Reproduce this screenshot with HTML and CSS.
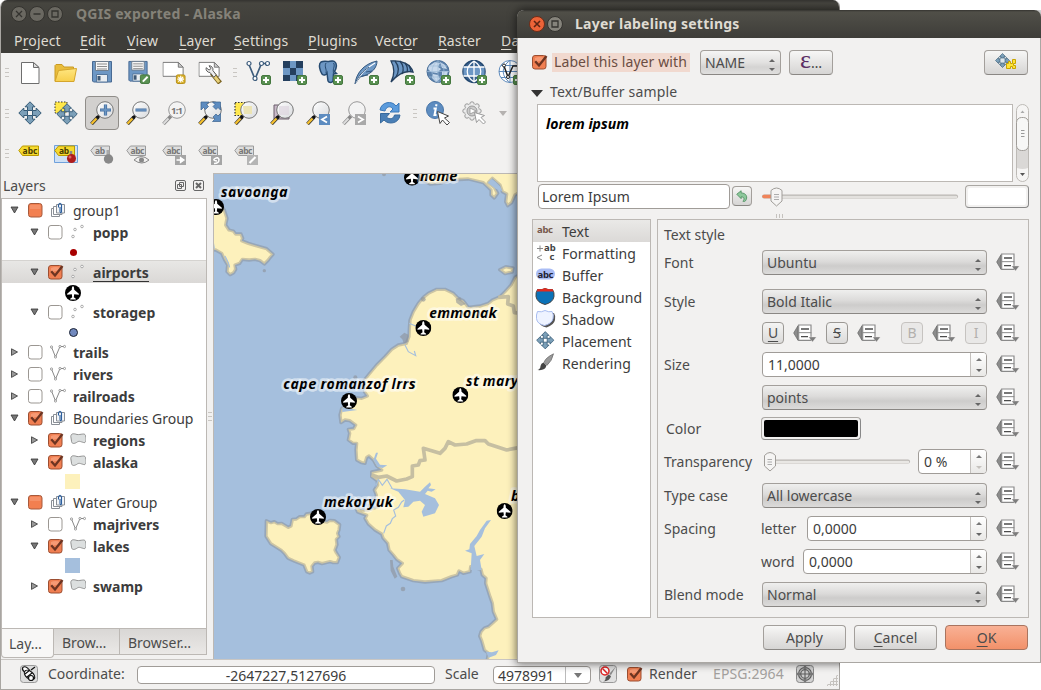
FILE: index.html
```html
<!DOCTYPE html>
<html lang="en">
<head>
<meta charset="utf-8">
<title>QGIS exported - Alaska</title>
<link rel="stylesheet" href="styles.css">
</head>
<body>
<svg class="sprite" width="0" height="0">
  <defs>
    <linearGradient id="gold" x1="0" y1="0" x2="0" y2="1"><stop offset="0" stop-color="#ffe680"/><stop offset="1" stop-color="#f7cf4d"/></linearGradient>
    <linearGradient id="lens" x1="0" y1="0" x2="1" y2="1"><stop offset="0" stop-color="#fff"/><stop offset="1" stop-color="#d8dadd"/></linearGradient>
    <symbol id="plus" viewBox="0 0 10 10"><rect x=".5" y=".5" width="9" height="9" rx="1.5" fill="#5a9152" stroke="#45783f"/><path d="M5 2v6M2 5h6" stroke="#fff" stroke-width="2"/></symbol>
    <symbol id="page" viewBox="0 0 24 24"><path d="M3.5 2.5h12l5.500 5v16h-17.500z" fill="#fff" stroke="#6e6e6e"/><path d="M15.500 2.500v5h5.500z" fill="#ddd" stroke="#6e6e6e"/></symbol>
    <symbol id="folder" viewBox="0 0 24 24"><path d="M1 21V5.500l1-1h6l2 2.500h9.500v3" fill="#e9bd3c" stroke="#c99a22"/><path d="M1 21.500L4.500 10.500 22.500 8.500 20 21.500z" fill="url(#gold)" stroke="#d5a52b"/></symbol>
    <symbol id="save" viewBox="0 0 24 24"><path d="M2.500 1.500h19v20.500h-18l-1-1z" fill="#6d97c4" stroke="#486a93"/><path d="M5.500 1.500h13v9h-13z" fill="#f7f7f7" stroke="#6f7e8e"/><path d="M7 4h10M7 6.500h10M7 9h10" stroke="#8c8c8c"/><path d="M6.500 14.500h11v7.500h-11z" fill="#e9edf1" stroke="#55779d"/><path d="M7.500 16h3v4.500h-3z" fill="#415a75"/></symbol>
    <symbol id="saveas" viewBox="0 0 24 25"><use href="#save" width="24" height="24"/><rect x="14.500" y="15.500" width="9.500" height="9" rx="1.500" fill="#5a9152" stroke="#45783f"/><path d="M17 22.500l5-5" stroke="#fff" stroke-width="2"/></symbol>
    <symbol id="wide" viewBox="0 0 24 24"><path d="M.5 2.500h16l5 5v9.500H.5z" fill="#fff" stroke="#777"/><path d="M16.500 2.500v5h5z" fill="#ccc" stroke="#777"/></symbol>
    <symbol id="composer" viewBox="0 0 24 25"><use href="#wide" width="24" height="24"/><rect x="14.500" y="15.500" width="9" height="9" rx="1.500" fill="#d9b12c" stroke="#b68e16"/><path d="M19 16.500v7M15.500 20h7M16.500 17.500l5 5M21.500 17.500l-5 5" stroke="#fff" stroke-width="1.200"/></symbol>
    <symbol id="wrench" viewBox="0 0 24 25"><use href="#wide" width="24" height="24"/><path d="M14 13.500l8.500 10.500" stroke="#7b6320" stroke-width="5"/><path d="M15.500 15.500l6 7.500" stroke="#e9d27a" stroke-width="3"/><path d="M11 6a4 4 0 0 1 4 5l3.500 4.500-2.500 2.500-4-5a4 4 0 0 1-4-5l3 2.500 2-1.500z" fill="#eee" stroke="#555"/></symbol>
    <symbol id="vec" viewBox="0 0 24 24"><path d="M2.500 3.500L9 19l6.500-15.500h6" fill="none" stroke="#3d5c7c" stroke-width="1.700"/><g fill="#fff" stroke="#3d5c7c" stroke-width="1.200"><circle cx="3" cy="3.500" r="2"/><circle cx="9" cy="18.500" r="2"/><circle cx="15.500" cy="3.500" r="2"/><circle cx="21.500" cy="3.500" r="2"/></g></symbol>
    <symbol id="raster" viewBox="0 0 24 24"><path d="M1 1h20v20H1z" fill="#6d97c4"/><path d="M1 1h7v7H1zM14 1h7v7h-7zM8 8h6v7H8zM1 15h7v6H1zM14 15h7v6h-7z" fill="#243f5e"/></symbol>
    <symbol id="pg" viewBox="0 0 24 24"><path d="M3 2c-3 2-1 9 1 12 2 2 4 1 5-1l1 8c1 2 4 2 5 0l.5-7 3-.5-2-2c2-3 3-8 0-10-2-1.500-5 0-6 0S6 .5 3 2z" fill="#6d97c4" stroke="#264a70" stroke-width="1.500"/><path d="M8 3c-2 4 1 6 0 10M15.500 3c2 3-1 5 0 10" fill="none" stroke="#264a70"/></symbol>
    <symbol id="feather" viewBox="0 0 24 24"><path d="M1 24C2 14 9 4 23 1c0 6-4 13-17 16z" fill="#6d97c4" stroke="#35587f"/><path d="M1 24C5 15 12 8 21 3" fill="none" stroke="#fff" stroke-width="1.200"/><path d="M1 24c3-8 8-13 14-17M8 16l6-1M12 12l6-1" fill="none" stroke="#35587f"/></symbol>
    <symbol id="shell" viewBox="0 0 24 24"><path d="M1 1c10-1 20 3 22 11-8-2-15 2-22 10 4-8 4-14 0-21z" fill="#6d97c4" stroke="#243f5e" stroke-width="1.300"/><path d="M5 1c4 5 4 11 1 16M10 1c4 5 4 9 2 13M15 3c3 4 3 6 2 9M19 5l2 6" fill="none" stroke="#243f5e" stroke-width="1.300"/></symbol>
    <symbol id="globe1" viewBox="0 0 24 24"><circle cx="12" cy="11.500" r="11" fill="#5e83ac" stroke="#4d719a"/><path d="M3 6l6-4 5 1-2 4 3 2-4 4-6-1-3-3zM14 2l5 3 2 4-5-1zM7 14l5 1 2 4-4 3-4-4zM16 11l6 0-2 7-4 2z" fill="#c8d9ec"/><path d="M1 11.500h22M12 .5v22M3 6h18M3 17h18M12 .5c-8 6-8 16 0 22M12 .5c8 6 8 16 0 22" fill="none" stroke="#9fbbd9" stroke-width=".7"/></symbol>
    <symbol id="globe2" viewBox="0 0 24 24"><circle cx="12" cy="11.500" r="11" fill="#39618e" stroke="#24486f" stroke-width="1.500"/><path d="M1.500 7h21v9h-21z" fill="#6d97c4"/><path d="M1.500 7h21M1.500 16h21M12 1v21M12 1c-9 6-9 15 0 21M12 1c9 6 9 15 0 21" fill="none" stroke="#fff" stroke-width="1.300"/></symbol>
    <symbol id="globe3" viewBox="0 0 24 24"><circle cx="12" cy="11.500" r="11" fill="#fff" stroke="#5f8bbc"/><path d="M1 11.500h22M12 .5v22M3 5.500h18M3 17.500h18M12 .5c-9 6-9 16 0 22" fill="none" stroke="#5f8bbc"/><path d="M6 6l4 11 5-11h5" fill="none" stroke="#222" stroke-width="1.500"/><circle cx="6" cy="5.500" r="1.500" fill="#fff" stroke="#222"/><circle cx="10" cy="17" r="1.500" fill="#fff" stroke="#222"/></symbol>
    <symbol id="pan" viewBox="0 0 24 24"><g fill="#7b9fb8" stroke="#355a75"><path d="M12 .8l5 5h-2.500v3.700h-5V5.800H7z"/><path d="M12 23.200l5-5h-2.500v-3.700h-5v3.700H7z"/><path d="M.8 12l5-5v2.500h3.700v5H5.800V17z"/><path d="M23.200 12l-5-5v2.500h-3.700v5h3.700V17z"/></g></symbol>
    <symbol id="pansel" viewBox="0 0 24 24"><path d="M1 1h12l-1 11H1z" fill="#ffe74a" stroke="#333" stroke-dasharray="1.500 1.500"/><use href="#pan" x="2" y="2" width="22" height="22"/></symbol>
    <symbol id="mag" viewBox="0 0 24 24"><path d="M1.500 23L8 16" stroke="#333" stroke-width="3.600"/><path d="M1.500 22.800L6.500 17.500" stroke="#f5c02e" stroke-width="2.300"/><path d="M7 17l3-3" stroke="#111" stroke-width="3"/><circle cx="15" cy="9" r="8.300" fill="url(#lens)" stroke="#777"/></symbol>
    <symbol id="maggray" viewBox="0 0 24 24"><path d="M1.500 23L9 15" stroke="#888" stroke-width="3.400"/><path d="M1.500 22.800L6.500 17.500" stroke="#ddd" stroke-width="2"/><circle cx="15" cy="9" r="8.300" fill="#f3f3f3" stroke="#999"/></symbol>
    <symbol id="zin" viewBox="0 0 24 24"><use href="#mag" width="24" height="24"/><path d="M15.500 3.500v11M10 9h11" stroke="#446e9f" stroke-width="3.200"/><path d="M15.500 4v10M10.500 9h10" stroke="#6d97c4" stroke-width="1.600"/></symbol>
    <symbol id="zout" viewBox="0 0 24 24"><use href="#mag" width="24" height="24"/><path d="M9.500 9h11" stroke="#446e9f" stroke-width="3.200"/><path d="M10 9h10" stroke="#6d97c4" stroke-width="1.600"/></symbol>
    <symbol id="z11" viewBox="0 0 24 24"><use href="#maggray" width="24" height="24"/><text x="9" y="13" font-family="Noto Sans" font-size="9.500" font-weight="700" fill="#777" textLength="12">1:1</text></symbol>
    <symbol id="zfull" viewBox="0 0 24 24"><use href="#mag" width="24" height="24"/><g fill="#5d8cc0" stroke="#39618e" stroke-width=".7"><path d="M3 1h8L8.500 3.500l2 2-3 3-2-2L3 9zM22.500 1h-8L17 3.500l-2 2 3 3 2-2L22.500 9zM22.500 20.500h-8L17 18l-2-2 3-3 2 2 2.500-2.500z"/></g></symbol>
    <symbol id="zsel" viewBox="0 0 24 24"><path d="M1 1.500h12v13H1z" fill="#ffe84f" stroke="#333" stroke-width="1.200" stroke-dasharray="1.500 1.500"/><use href="#mag" width="24" height="24"/><path d="M9 5h9v8H10z" fill="#ece4b4"/></symbol>
    <symbol id="zlay" viewBox="0 0 24 24"><path d="M4 4h15v14H4z" fill="#c9b9c9" stroke="#6b5d6b"/><use href="#mag" width="24" height="24"/><path d="M9 5h10v9H9z" fill="#ded5df" opacity=".7"/></symbol>
    <symbol id="zlast" viewBox="0 0 24 24"><use href="#mag" width="24" height="24"/><path d="M13 13h11v11H13z" fill="#5d8cc0"/><path d="M21 15.500l-5 3 5 3" fill="none" stroke="#fff" stroke-width="1.800"/></symbol>
    <symbol id="znext" viewBox="0 0 24 24"><use href="#maggray" width="24" height="24"/><path d="M13 13h11v11H13z" fill="#a9a9a9"/><path d="M16 15.500l5 3-5 3" fill="none" stroke="#fff" stroke-width="1.800"/></symbol>
    <symbol id="refresh" viewBox="0 0 24 24"><path d="M2 9C3 1 14-1 18 5l3-3v9h-9l3-3C12 4 8 6 7 10z" fill="#5b9bdc" stroke="#3b78b8"/><path d="M22 14c-1 9-12 10-16 5l-3.500 3v-9.500h9L8.500 16c3 3 7 2 8-2z" fill="#4a7fb6" stroke="#386a9d"/></symbol>
    <symbol id="ident" viewBox="0 0 24 24"><circle cx="9" cy="9" r="8.500" fill="#5d8cc0" stroke="#4a76a8"/><path d="M10.500 3.200l-.4 2M7.500 7.500h2.300L8.500 14h2" fill="none" stroke="#fff" stroke-width="2"/><path d="M11.500 10.500l2.500 12 2.500-3.500 4.500 5 2.500-2.500-5-4.500 4-2z" fill="#fff" stroke="#444"/></symbol>
    <symbol id="gear" viewBox="0 0 24 24"><g fill="#ececec" stroke="#999"><circle cx="10" cy="3" r="2.200"/><circle cx="15" cy="5" r="2.200"/><circle cx="17" cy="10" r="2.200"/><circle cx="15" cy="15" r="2.200"/><circle cx="10" cy="17" r="2.200"/><circle cx="5" cy="15" r="2.200"/><circle cx="3" cy="10" r="2.200"/><circle cx="5" cy="5" r="2.200"/></g><circle cx="10" cy="10" r="7" fill="#ececec"/><circle cx="10" cy="10" r="5" fill="#ccc" stroke="#999"/><path d="M8 7l6 3-6 3z" fill="#fff" stroke="#888" stroke-width=".7"/><path d="M12.500 11.500l2 10 2.500-3 4.500 4.500 2-2-4.500-4.500 3.500-2z" fill="#fff" stroke="#999"/></symbol>
    <symbol id="tagY" viewBox="0 0 24 24"><path d="M.8 8.500L4.500 4H20.500v9.500H4.500z" fill="#f5d92e" stroke="#b99900"/></symbol>
    <symbol id="tagG" viewBox="0 0 24 24"><path d="M.8 8.500L4.500 4H19.500v9.500H4.500z" fill="#dedede" stroke="#9a9a9a"/></symbol>
    <symbol id="dd" viewBox="0 0 75 60"><path d="M5 30L18 8v44z" fill="#8c8c8c" stroke="#626262" stroke-width="2"/><path d="M20 6h37v46H20z" fill="#fff" stroke="#8a8a8a" stroke-width="3.500"/><path d="M18 29h40" stroke="#8a8a8a" stroke-width="3"/><path d="M27 18h24M27 41h21" stroke="#4c4c4c" stroke-width="4"/><path d="M50 42h23L61.500 57z" fill="#7d7d7d" stroke="#f2f1f0" stroke-width="1"/></symbol>
    <symbol id="chk" viewBox="0 0 17 16"><rect x=".5" y="1.500" width="13.500" height="13.500" rx="2.500" fill="#f07f52" stroke="#9c4e31"/><path d="M3 4q4.500-2 9 0v3q-5-1-9 2z" fill="#f9a583" opacity=".7"/><path d="M3.200 7.200L7 11.500 14.500 2" fill="none" stroke="#6d3421" stroke-width="2.300"/></symbol>
    <symbol id="part" viewBox="0 0 17 16"><rect x=".5" y="1.500" width="13.500" height="13.500" rx="2.500" fill="#f27f50" stroke="#a75a3c"/><path d="M2 3h10.500v4H2z" fill="#f69872" opacity=".7"/></symbol>
    <symbol id="unc" viewBox="0 0 17 16"><rect x=".5" y="1.500" width="13.500" height="13.500" rx="2.500" fill="#fff" stroke="#9b9792"/></symbol>
    <symbol id="down" viewBox="0 0 9 8"><path d="M1 1h7L4.500 7z" fill="#777" stroke="#333" stroke-width=".8"/></symbol>
    <symbol id="right" viewBox="0 0 9 8"><path d="M1.500 .8v6.600L7.500 4z" fill="#999" stroke="#444" stroke-width=".9"/></symbol>
    <symbol id="grp" viewBox="0 0 16 16"><g fill="#fff" stroke="#8a8f96"><path d="M1.500 6.500h8v8h-8z"/><path d="M3.500 4.500h8.500v8H3.500z"/><path d="M6.500 2.500h8v8.500h-8z" fill="#f2f5f8"/></g><path d="M8.500 5.500V3q1.500-3.500 3 0v7q-1.200 1.500-1.500-.5V5" fill="none" stroke="#2c5f9e" stroke-width="1.100"/></symbol>
    <symbol id="pts" viewBox="0 0 16 16"><g fill="#fff" stroke="#999" stroke-width=".8"><circle cx="5" cy="5.500" r="1.300"/><circle cx="12" cy="2.500" r="1.300"/><circle cx="3" cy="12.500" r="1.300"/></g></symbol>
    <symbol id="lin" viewBox="0 0 16 16"><path d="M1.500 3l4 10L10 2.500h5" fill="none" stroke="#888"/><g fill="#fff" stroke="#888" stroke-width=".8"><circle cx="1.500" cy="3" r="1.100"/><circle cx="5.500" cy="13" r="1.100"/><circle cx="10" cy="2.500" r="1.100"/><circle cx="14.500" cy="2.500" r="1.100"/></g></symbol>
    <symbol id="pol" viewBox="0 0 16 16"><path d="M.8 4.500C1 1 4 1.500 7 2.500 11 3 14.500 .5 15.500 3.500s1 8-2 7C10 9.500 9 8.500 6.500 10.500 3 12.500 1.500 11 1.500 9z" fill="#dcdfdf" stroke="#888" stroke-width=".9"/></symbol>
    <symbol id="plane" viewBox="0 0 24 24"><circle cx="12" cy="12" r="12" fill="#000"/><path d="M12 2c1.200 0 1.800 2 1.800 5l7 6v1.800l-7-1-.6 4.700 3 2v1.200H7.800v-1.200l3-2-.6-4.700-7 1V13l7-6c0-3 .6-5 1.800-5z" fill="#fff"/></symbol>
  </defs>
</svg>

<div class="win main">
  <div class="titlebar">
    <svg class="wbtn" viewBox="0 0 16 16"><circle cx="8" cy="8" r="7.500"/><path d="M5 5l6 6M11 5l-6 6"/></svg>
    <svg class="wbtn" viewBox="0 0 16 16"><circle cx="8" cy="8" r="7.500"/><path d="M4.500 8h7"/></svg>
    <svg class="wbtn" viewBox="0 0 16 16"><circle cx="8" cy="8" r="7.500"/><path d="M5 5h6v6H5z"/></svg>
    <span class="title">QGIS exported - Alaska</span>
  </div>
  <div class="menubar"><span class="m1">P<u>r</u>oject</span><span class="m2"><u>E</u>dit</span><span class="m3"><u>V</u>iew</span><span class="m4"><u>L</u>ayer</span><span class="m5"><u>S</u>ettings</span><span class="m6"><u>P</u>lugins</span><span class="m7">Vect<u>o</u>r</span><span class="m7"><u>R</u>aster</span><span><u>D</u>atabase</span></div>

  <div class="toolrow r1">
    <i class="grip"></i>
    <b><svg><use href="#page"/></svg></b><b><svg><use href="#folder"/></svg></b><b><svg><use href="#save"/></svg></b><b><svg><use href="#saveas"/></svg></b><b><svg><use href="#composer"/></svg></b><b><svg><use href="#wrench"/></svg></b>
    <i class="grip"></i>
    <b><svg><use href="#vec"/></svg><svg class="badge"><use href="#plus"/></svg></b><b><svg><use href="#raster"/></svg><svg class="badge"><use href="#plus"/></svg></b><b><svg><use href="#pg"/></svg><svg class="badge"><use href="#plus"/></svg></b><b><svg><use href="#feather"/></svg><svg class="badge"><use href="#plus"/></svg></b><b><svg><use href="#shell"/></svg><svg class="badge"><use href="#plus"/></svg></b><b><svg><use href="#globe1"/></svg><svg class="badge"><use href="#plus"/></svg></b><b><svg><use href="#globe2"/></svg><svg class="badge"><use href="#plus"/></svg></b><b><svg><use href="#globe3"/></svg><svg class="badge"><use href="#plus"/></svg></b>
  </div>
  <div class="toolrow r2">
    <i class="grip"></i>
    <b><svg><use href="#pan"/></svg></b><b><svg><use href="#pansel"/></svg></b><b class="on"><svg><use href="#zin"/></svg></b><b><svg><use href="#zout"/></svg></b><b><svg><use href="#z11"/></svg></b><b><svg><use href="#zfull"/></svg></b><b><svg><use href="#zsel"/></svg></b><b><svg><use href="#zlay"/></svg></b><b><svg><use href="#zlast"/></svg></b><b><svg><use href="#znext"/></svg></b><b><svg><use href="#refresh"/></svg></b>
    <i class="grip"></i>
    <b><svg><use href="#ident"/></svg></b><b><svg><use href="#gear"/></svg></b><i class="drop"></i>
  </div>
  <div class="toolrow r3">
    <i class="grip"></i>
    <b><svg viewBox="0 0 24 24"><use href="#tagY"/><text class="abc" x="4.500" y="12" textLength="15">abc</text></svg></b>
    <b><svg viewBox="0 0 24 24"><path d="M.5 3.500h23v17H.5z" fill="#cfe0f4" stroke="#6fa1dc"/><use href="#tagY"/><text class="abc" x="5" y="12" textLength="10">ab</text><path d="M17 16V9" stroke="#888" stroke-width="2.500"/><circle cx="17.500" cy="16.500" r="4.500" fill="#b01c1c"/><circle cx="16" cy="15" r="1.500" fill="#d66"/></svg></b>
    <b><svg viewBox="0 0 24 24"><use href="#tagG"/><text class="abc g" x="5" y="12" textLength="10">ab</text><path d="M18 16V8" stroke="#aaa" stroke-width="3"/><circle cx="18.500" cy="17" r="4.700" fill="#888"/></svg></b>
    <b><svg viewBox="0 0 24 24"><use href="#tagG"/><text class="abc g" x="4.500" y="12" textLength="14">abc</text><path d="M8 18q7-7 15 0-7 6-15 0z" fill="#f2f1f0" stroke="#888"/><circle cx="15.500" cy="18" r="2.500" fill="#888"/></svg></b>
    <b><svg viewBox="0 0 24 24"><use href="#tagG"/><text class="abc g" x="4.500" y="12" textLength="14">abc</text><path d="M13 13h11v10H13z" fill="#a5a5a5"/><path d="M14.500 18h4M18.500 15.500l3.500 2.500-3.500 2.500z" fill="#fff" stroke="#fff" stroke-width="1.300"/></svg></b>
    <b><svg viewBox="0 0 24 24"><use href="#tagG"/><text class="abc g" x="4.500" y="12" textLength="14">abc</text><path d="M13 13h11v10H13z" fill="#a5a5a5"/><path d="M16 21.500q5 0 5-4-1-3-4-1t2 2.500" fill="none" stroke="#fff" stroke-width="1.500"/></svg></b>
    <b><svg viewBox="0 0 24 24"><use href="#tagG"/><text class="abc g" x="4.500" y="12" textLength="14">abc</text><path d="M13 13h11v10H13z" fill="#b5b5b5"/><path d="M15.500 21l6-6" stroke="#fff" stroke-width="2.200"/></svg></b>
  </div>

  <div class="work">
    <div class="dock">
      <div class="dockhead"><span>Layers</span>
        <svg viewBox="0 0 12 12"><rect x=".5" y=".5" width="10" height="10" rx="1.500"/><path d="M4.500 2.500h4v4h-4zM2.500 4.500h4v4h-4z"/></svg>
        <svg viewBox="0 0 12 12"><rect x=".5" y=".5" width="10" height="10" rx="1.500"/><path d="M3 3l5 5M8 3L3 8" stroke-width="2"/></svg>
      </div>
      <div class="tree">
        <div class="node"><svg class="tri"><use href="#down"/></svg><svg class="cb"><use href="#part"/></svg><svg class="ic"><use href="#grp"/></svg><span class="g">group1</span></div>
        <div class="node sub"><svg class="tri"><use href="#down"/></svg><svg class="cb"><use href="#unc"/></svg><svg class="ic"><use href="#pts"/></svg><span>popp</span></div>
        <div class="sym"><i class="dot red"></i></div>
        <div class="node sub sel"><svg class="tri"><use href="#down"/></svg><svg class="cb"><use href="#chk"/></svg><svg class="ic"><use href="#pts"/></svg><span class="ul">airports</span></div>
        <div class="sym"><svg class="pl"><use href="#plane"/></svg></div>
        <div class="node sub"><svg class="tri"><use href="#down"/></svg><svg class="cb"><use href="#unc"/></svg><svg class="ic"><use href="#pts"/></svg><span>storagep</span></div>
        <div class="sym"><i class="dot blue"></i></div>
        <div class="node"><svg class="tri"><use href="#right"/></svg><svg class="cb"><use href="#unc"/></svg><svg class="ic"><use href="#lin"/></svg><span>trails</span></div>
        <div class="node"><svg class="tri"><use href="#right"/></svg><svg class="cb"><use href="#unc"/></svg><svg class="ic"><use href="#lin"/></svg><span>rivers</span></div>
        <div class="node"><svg class="tri"><use href="#right"/></svg><svg class="cb"><use href="#unc"/></svg><svg class="ic"><use href="#lin"/></svg><span>railroads</span></div>
        <div class="node"><svg class="tri"><use href="#down"/></svg><svg class="cb"><use href="#chk"/></svg><svg class="ic"><use href="#grp"/></svg><span class="g">Boundaries Group</span></div>
        <div class="node sub"><svg class="tri"><use href="#right"/></svg><svg class="cb"><use href="#chk"/></svg><svg class="ic"><use href="#pol"/></svg><span>regions</span></div>
        <div class="node sub"><svg class="tri"><use href="#down"/></svg><svg class="cb"><use href="#chk"/></svg><svg class="ic"><use href="#pol"/></svg><span>alaska</span></div>
        <div class="sym"><i class="sq yellow"></i></div>
        <div class="node"><svg class="tri"><use href="#down"/></svg><svg class="cb"><use href="#part"/></svg><svg class="ic"><use href="#grp"/></svg><span class="g">Water Group</span></div>
        <div class="node sub"><svg class="tri"><use href="#right"/></svg><svg class="cb"><use href="#unc"/></svg><svg class="ic"><use href="#lin"/></svg><span>majrivers</span></div>
        <div class="node sub"><svg class="tri"><use href="#down"/></svg><svg class="cb"><use href="#chk"/></svg><svg class="ic"><use href="#pol"/></svg><span>lakes</span></div>
        <div class="sym"><i class="sq water"></i></div>
        <div class="node sub"><svg class="tri"><use href="#right"/></svg><svg class="cb"><use href="#chk"/></svg><svg class="ic"><use href="#pol"/></svg><span>swamp</span></div>
      </div>
      <div class="tabs"><span class="tab cur">Lay…</span><span class="tab t2">Brow…</span><span class="tab t3">Browser…</span></div>
    </div>
    <div class="split"><i class="grip"></i></div>
    <svg class="map" viewBox="27 12 933 1455" preserveAspectRatio="xMinYMin slice">
      <rect x="24" y="9" width="940" height="1462" fill="#a5bfdd"/>
      <g class="land">
        <path d="M10 90L40 95 58 120 66 145 62 165 72 180 85 183 92 192 108 192 113 205 110 212 130 220 150 226 185 236 204 253 196 262 190 270 178 282 165 272 150 268 132 270 112 268 104 280 90 285 92 298 86 308 75 314 66 305 68 285 58 268 50 250 32 240 10 238z"/>
        <path d="M640 -10L650 30 675 42 705 40 735 30 790 27 835 38 858 60 858 75 868 84 878 70 868 52 850 38 862 25 885 45 892 65 905 72 902 95 908 107 920 98 930 75 960 58 960-10z"/>
        <path d="M884 299l18-9 22 4-2 12-22 5z"/>
        <path d="M970 300L930 322 918 345 900 365 885 380 862 390 850 400 825 408 790 412 775 392 760 385 745 370 720 358 695 358 670 370 655 382 640 400 625 425 615 450 613 475 612 500 604 520 580 525 560 538 540 560 515 585 490 615 478 630 480 655 478 665 487 678 470 685 455 683 430 702 410 715 405 735 408 758 420 750 434 752 452 765 446 776 430 778 434 790 430 810 444 820 455 820 453 840 455 870 470 878 480 880 485 862 492 858 505 870 515 888 530 900 500 906 500 920 516 932 518 945 508 960 514 975 512 990 520 1010 490 1020 470 1020 452 1012 458 1026 485 1036 480 1045 490 1062 510 1080 530 1092 534 1104 548 1120 552 1140 565 1155 575 1168 592 1180 578 1195 584 1210 590 1220 625 1232 660 1236 710 1232 740 1220 757 1215 762 1203 775 1210 795 1205 797 1190 828 1198 832 1215 843 1225 842 1240 855 1280 862 1300 865 1325 875 1348 862 1360 850 1370 838 1374 828 1385 824 1398 830 1412 838 1440 850 1450 845 1480 970 1480z"/>
        <path d="M184 1052l14 6 10-3 10 6 12-1 20 12 8-4 4-20 12-1 10-7 14 0 6-8 20-3 30 25 12 2 8-5 14 1 16 12-2 16-4 10 4 10-8 8 2 16-6 16 4 8 9 14-6 16-12 0-10-3-24 6-12-4-10 2-8 10 2 16-9 4-9-4-8-20-30-12-18-8-10-14-10-10-32-20-10-16-4-6z"/>
      </g>
      <g class="lake">
        <path d="M555 955L600 958 645 965 660 950 675 937 678 945 670 955 692 958 680 965 668 962 660 972 690 985 702 1005 690 1030 655 1040 650 1025 660 1005 645 992 625 995 610 1010 595 1012 600 990 580 965z"/>
        <path d="M797 1200L800 1150 780 1142 793 1138 795 1122 815 1098 825 1080 845 1052 858 1050 840 1075 830 1100 808 1128 815 1158 838 1152 825 1170 830 1200z"/>
        <path d="M843 1445l18 2 20-6-8 14-22 8zM848 38l12-12 12 10 14 14 6 14-20-8zM412 712l45 8-45 6zM505 870l8-22 6 0-6 18 12 18 22 2-14 8-16-4z"/>
        <path class="river" d="M60 258l10 20 4 14M24 212l4 24M612 460l20 8M600 525l10 20 22 12-4-14M536 1090l8-22 12-8 6-14 10-8-6-18 14-8 10-16 8-6M512 950l8-22 12 18 14-18 16 28"/>
      </g>
      <path class="bord" d="M500 915L520 922 545 918 575 933 605 927 622 920 622 888 640 885 645 872 660 870 655 835 680 842 705 850 720 835 730 815 750 825 785 822 812 812 840 812 850 822 880 832 905 840 945 832 965 832"/>
      <path class="bord" d="M880 382L910 380 908 402 925 408 928 428 950 430"/>
      <g fill="#8d9299" opacity=".6"><circle cx="178" cy="302" r="5"/><circle cx="537" cy="13" r="6"/><circle cx="655" cy="388" r="7"/><path d="M752 386l14-4 4 10 12 10-14 6-14-10zM584 500l14-12 12 6 0 22-14 4-4-12z"/><circle cx="451" cy="622" r="6"/><circle cx="594" cy="1257" r="7"/><path d="M555 1170l8 0 2 20 12 30-8 6-12-24z"/></g>
      <use href="#plane" x="9" y="87" width="48" height="48"/><use href="#plane" x="597" y="-1" width="48" height="48"/><use href="#plane" x="631" y="450" width="48" height="48"/><use href="#plane" x="408" y="669" width="48" height="48"/><use href="#plane" x="742" y="651" width="48" height="48"/><use href="#plane" x="315" y="1017" width="48" height="48"/><use href="#plane" x="875" y="999" width="48" height="48"/>
      <g class="lbl">
        <text x="48" y="81" textLength="200">savoonga</text><text x="645" y="34" textLength="112">nome</text><text x="673" y="443" textLength="202">emmonak</text><text x="235" y="658" textLength="397">cape romanzof lrrs</text><text x="783" y="647" textLength="178">st marys</text><text x="357" y="1011" textLength="207">mekoryuk</text><text x="918" y="993">bethel</text>
      </g>
    </svg>
  </div>

  <div class="status">
    <svg class="mouse" viewBox="0 0 18 18"><rect x=".5" y=".5" width="17" height="17" rx="3" fill="#ddd" stroke="#999"/><g stroke="#111" fill="#fff" stroke-width="1.200"><ellipse cx="6" cy="5" rx="4" ry="2.500" transform="rotate(40 6 5)"/><ellipse cx="9.500" cy="10" rx="6" ry="3.600" transform="rotate(40 9.500 10)"/><circle cx="11" cy="13" r="2.500"/><path d="M5 9l5-4M7 12l5-4M11 5l4-3" fill="none"/></g></svg>
    <span class="coord">Coordinate:</span><span class="edit">-2647227,5127696</span><span class="scale">Scale</span>
    <span class="combo2"><span>4978991</span><i></i></span>
    <svg class="stop" viewBox="0 0 18 18"><rect x=".5" y=".5" width="17" height="17" rx="3" fill="#e0e0e0" stroke="#999"/><path d="M16.500 2l-4.500 8 -2-1z" fill="#888"/><path d="M9.500 9.500l2.500 1.500q-1 5-8 5.500 3-1 2.500-4z" fill="#555"/><circle cx="6" cy="6" r="4" fill="#fff" stroke="#d22" stroke-width="1.500"/><path d="M3.500 3.500l5 5" stroke="#d22" stroke-width="1.500"/></svg>
    <svg class="cb"><use href="#chk"/></svg><span class="rend">Render</span><span class="epsg">EPSG:2964</span>
    <svg class="crs" viewBox="0 0 18 18"><rect x=".5" y=".5" width="17" height="17" rx="3" fill="#d2d2d2" stroke="#888"/><g fill="none" stroke="#5c5c5c" stroke-width="1.100"><circle cx="9" cy="9" r="6.500" fill="#b4b4b4"/><path d="M9 1v16M1 9h16" stroke-width="2.500" stroke="#777"/><circle cx="9" cy="9" r="4.200" fill="#ccc"/><path d="M9 4.800v8.400M4.800 9h8.400"/></g></svg>
    <i class="sizer"></i>
  </div>
</div>

<div class="win dialog">
  <div class="titlebar">
    <svg class="wbtn hot" viewBox="0 0 16 16"><circle cx="8" cy="8" r="7.500"/><path d="M5 5l6 6M11 5l-6 6"/></svg>
    <svg class="wbtn lite" viewBox="0 0 16 16"><circle cx="8" cy="8" r="7.500"/><path d="M5 5h6v6H5z"/></svg>
    <span class="title">Layer labeling settings</span>
  </div>
  <div class="top">
    <svg class="cb"><use href="#chk"/></svg><span class="hl">Label this layer with</span><span class="combo name">NAME</span><span class="btn eps"><em>ε</em>…</span>
    <span class="btn auto"><svg viewBox="0 0 24 18"><use href="#pan" x="1" y="0" width="15" height="15"/><path d="M6 5h5v5H6z" fill="#dce6ec" stroke="#355a75" stroke-width=".6"/><path d="M12.500 15.500v-5h2v-2h2v2h2v-4h3v4h-2v2h2v3h-3v-2h-2v2z" fill="#ffe437" stroke="#c9a500"/></svg></span>
  </div>
  <div class="collapse"><i></i><span>Text/Buffer sample</span></div>
  <div class="sample">
    <div class="preview">lorem ipsum</div>
    <svg class="scroll" viewBox="0 0 13 78"><rect x=".5" y=".5" width="12" height="77" rx="6" fill="#f6f5f4" stroke="#bdbab6"/><path d="M1 40h11v24q-5 2-11 0z" fill="#dad8d6"/><path d="M4.500 9h4L6.500 6.500z" fill="#aaa"/><path d="M4 69h5L6.500 72z" fill="#555"/><rect x=".5" y="13.500" width="12" height="33" rx="5" fill="#f7f7f6" stroke="#a09d99"/><path d="M5 26.500h3.500M5 29.500h3.500M5 32.500h3.500" stroke="#999"/></svg>
  </div>
  <div class="samplectl">
    <span class="edit">Lorem Ipsum</span>
    <span class="btn undo"><svg viewBox="0 0 16 16"><path d="M2 6l5-4v2.500c6 0 8 5 5 9-1 1-2 1-3 .5 2-2 2-5-2-5V11z" fill="#8cc79b" stroke="#4f8f60"/></svg></span>
    <svg class="slider s1" viewBox="0 0 196 20"><path d="M2 9.500h192" stroke="#b9b6b2" stroke-width="4" stroke-linecap="round"/><path d="M2 10h192" stroke="#e3e1de" stroke-width="2.500" stroke-linecap="round"/><path d="M2 9.500h9" stroke="#f0845a" stroke-width="3.500" stroke-linecap="round"/><path class="knob" d="M9 3.500q5.500-5 11 0v10.500L14.500 19 9 14z"/><path d="M12 7.500h5M12 10h5M12 12.500h5" stroke="#999" stroke-width=".8"/></svg>
    <span class="color white"></span>
  </div>
  <div class="dots"><i></i><i></i><i></i></div>
  <div class="body">
    <div class="list">
      <div class="it cur"><svg viewBox="0 0 20 20"><text class="sm" x="1" y="12" fill="#76594d" textLength="16">abc</text></svg><span>Text</span></div>
      <div class="it"><svg viewBox="0 0 20 20"><text class="sm" fill="#444"><tspan x="8" y="8">ab</tspan><tspan x="13.500" y="16.500">c</tspan></text><path d="M1 5.500h6M4 2.500v6M6 12l-5 2.500 5 2.500" fill="none" stroke="#888"/></svg><span>Formatting</span></div>
      <div class="it"><svg viewBox="0 0 20 20"><rect x="0" y="3.500" width="19" height="11" rx="5.500" fill="#aabdf5"/><text class="sm" x="1.500" y="12.500" fill="#223" textLength="16">abc</text></svg><span>Buffer</span></div>
      <div class="it"><svg viewBox="0 0 20 20"><path d="M1.500 2.500q4 1 7.500-1 4 2 7.500 1 2 3 1.500 7-1 6-9 8-8-2-9-8-.5-4 1.500-7z" fill="#0b72b8" stroke="#444"/><path d="M1.500 2q4 1 7.500-1 4 2 7.500 1l1 2.500H.8z" fill="#e02b20"/></svg><span>Background</span></div>
      <div class="it"><svg viewBox="0 0 20 20"><path d="M3 4q4 1 7.500-1 4 2 7.500 1 2 3 1 7-1 5-8.500 7.500Q3 17 2 11z" fill="#555"/><path d="M1.500 2.500q4 1 7.500-1 4 2 7 1 2 3 1 7-1 5-8.500 7Q1 15 .5 9.500 0 6 1.500 2.500z" fill="#eef3ff" stroke="#a9bdf0"/></svg><span>Shadow</span></div>
      <div class="it"><svg viewBox="0 0 20 20"><use href="#pan" width="18.500" height="18.500"/></svg><span>Placement</span></div>
      <div class="it"><svg viewBox="0 0 20 20"><path d="M17.500.8q-8 4-9.500 8.500l3 3Q16 8 17.500.8z" fill="#999" stroke="#666" stroke-width=".7"/><path d="M7.500 9.500l3 3Q9 18 1.500 17q3-1 3-4 .5-3 3-3.500z" fill="#444"/></svg><span>Rendering</span></div>
    </div>
    <div class="panel">
      <div class="ptitle">Text style</div>
      <div class="row r39"><label>Font</label><span class="combo f">Ubuntu</span><svg class="dd"><use href="#dd"/></svg></div>
      <div class="row r33"><label>Style</label><span class="combo f">Bold Italic</span><svg class="dd"><use href="#dd"/></svg></div>
      <div class="row r30 short"><label></label><span class="fb"><u>U</u></span><svg class="dd"><use href="#dd"/></svg><span class="fb m9"><s>S</s></span><svg class="dd"><use href="#dd"/></svg><span class="fb off m20">B</span><svg class="dd"><use href="#dd"/></svg><span class="fb off m9">I</span><svg class="dd"><use href="#dd"/></svg></div>
      <div class="row r33"><label>Size</label><span class="spin f">11,0000<i></i></span><svg class="dd"><use href="#dd"/></svg></div>
      <div class="row r32"><label></label><span class="combo f">points</span><svg class="dd"><use href="#dd"/></svg></div>
      <div class="row r32 short"><label class="in">Color</label><span class="color black"></span><svg class="dd far"><use href="#dd"/></svg></div>
      <div class="row r34"><label>Transparency</label><svg class="slider s2" viewBox="0 0 148 20"><path d="M4 9.500h142" stroke="#b9b6b2" stroke-width="4" stroke-linecap="round"/><path d="M4 10h142" stroke="#e9e7e4" stroke-width="2.500" stroke-linecap="round"/><path class="knob" d="M2.500 3.500q5.500-6 11 0v10.500L8 19 2.500 14z"/><path d="M5.500 7.500H10M5.500 10H10M5.500 12.500H10" stroke="#999" stroke-width=".8"/></svg><span class="spin pct">0 %<i class="lo"></i></span><svg class="dd"><use href="#dd"/></svg></div>
      <div class="row r33"><label>Type case</label><span class="combo f">All lowercase</span><svg class="dd"><use href="#dd"/></svg></div>
      <div class="row r33"><label>Spacing</label><span class="w1">letter</span><span class="spin sl">0,0000<i></i></span><svg class="dd"><use href="#dd"/></svg></div>
      <div class="row r33"><label></label><span class="w2">word</span><span class="spin sw">0,0000<i></i></span><svg class="dd"><use href="#dd"/></svg></div>
      <div class="row"><label>Blend mode</label><span class="combo f">Normal</span><svg class="dd"><use href="#dd"/></svg></div>
    </div>
  </div>
  <div class="buttons"><span class="btn">Apply</span><span class="btn"><u>C</u>ancel</span><span class="btn ok"><u>O</u>K</span></div>
</div>
</body>
</html>
```
FILE: styles.css
```css
* { box-sizing: border-box; }
html, body { margin: 0; }
body { position: relative; width: 1041px; height: 690px; overflow: hidden; background: #fff; font: 14px/20px "Noto Sans", sans-serif; color: #4c4c4c; white-space: nowrap; }
svg { display: block; flex: none; overflow: visible; }
i { flex: none; font-style: normal; }
.sprite { position: absolute; }
u { text-decoration: underline; text-underline-offset: 3px; text-decoration-thickness: 1px; text-decoration-skip-ink: none; }

.win { position: absolute; display: flex; flex-direction: column; background: #f2f1f0; }
.main { left: 0; top: 0; width: 840px; height: 690px; border: 1px solid #a9a6a2; border-top: 0; border-radius: 7px 7px 0 0; overflow: hidden; }
.titlebar { display: flex; align-items: center; height: 28px; background: linear-gradient(#343330, #46453f 3px, #3e3d39); gap: 2px; padding-left: 10px; flex: none; }
.title { font-weight: 700; font-size: 14px; letter-spacing: .25px; color: #858279; margin-left: 11px; }
.wbtn { width: 16px; height: 16px; }
.wbtn circle { fill: #6a6861; stroke: #34332f; }
.wbtn path { fill: none; stroke: #34332f; stroke-width: 1.3; }
.wbtn.hot circle { fill: #ec6338; stroke: #6e2c17; }
.wbtn.hot path { stroke: #5c2413; stroke-width: 1.6; }
.wbtn.lite circle { fill: #85837b; }
.menubar { display: flex; height: 25px; line-height: 26px; background: #3e3d39; color: #dfdbd2; padding-left: 12px; flex: none; letter-spacing: .15px; margin: 0 -1px; padding-left: 14px; }
.menubar span { flex: none; }
.m1 { width: 66px; }
.m2 { width: 47px; }
.m3 { width: 52px; }
.m4 { width: 55px; }
.m5 { width: 74px; }
.m6 { width: 67px; }
.m7 { width: 63px; }

.toolrow { display: flex; align-items: center; flex: none; margin-left: -1px; }
.r1 { height: 39px; padding-bottom: 1px; }
.r2 { height: 42px; }
.r3 { height: 39px; }
.toolrow b { position: relative; width: 36px; height: 36px; display: flex; align-items: center; justify-content: center; flex: none; font-weight: 400; }
.toolrow b > svg { width: 24px; height: 24px; }
.toolrow b > svg.badge { position: absolute; width: 10px; height: 10px; left: 21px; top: 21px; }
.toolrow b.on { width: 34px; height: 34px; margin: 0 1px; border: 1px solid #908d89; border-radius: 4px; background: #d2d0ce; }
.grip { width: 12px; height: 9px; background: repeating-linear-gradient(#c9c6c2 0 1px, transparent 1px 4px) 5px 0 / 4px 9px no-repeat; }
.drop { width: 0; border: 4px solid transparent; border-top: 5px solid #b5b2b0; border-bottom: 0; margin-left: 7px; }
.abc { font: 700 8.5px "Noto Sans"; fill: #4a3c00; }
.abc.g { fill: #777; }
.sm { font: 700 9.5px "Noto Sans"; }

.work { display: flex; height: 486px; flex: none; }
.dock { width: 206px; display: flex; flex-direction: column; }
.dockhead { height: 25px; display: flex; align-items: center; padding-left: 2px; gap: 6px; }
.dockhead span { flex: 1; }
.dockhead svg { width: 12px; height: 12px; fill: none; stroke: #666; }
.dockhead svg:last-child { margin-right: 2px; }
.tree { height: 431px; border: 1px solid #bcb8b4; background: #fff; }
.node { display: flex; height: 22px; align-items: center; padding-left: 8px; font-weight: 700; color: #3c3c3c; }
.node span { margin-top: 2px; }
.node .g { font-weight: 400; }
.sub { padding-left: 28px; }
.sel { background: linear-gradient(#e8e7e5, #dad8d6); box-shadow: 0 -1px #d5d3d0; }
.tri { width: 9px; height: 8px; margin: -1px 9px 0 0; }
.cb { width: 17px; height: 16px; margin-right: 5px; }
.node .cb { margin-left: -.5px; margin-right: 5.5px; }
.ic { width: 16px; height: 16px; margin-right: 7px; }
.node .ul { border-bottom: 1px solid #333; line-height: 18px; height: 18px; margin-top: 1px; }
.sym { height: 18px; width: 142px; display: flex; align-items: center; justify-content: center; }
.dot { width: 7px; height: 7px; border-radius: 50%; }
.red { background: #a80000; }
.blue { width: 9px; height: 9px; background: #7189be; border: 1px solid #1b2233; }
.pl { width: 16px; height: 16px; margin-top: 2px; }
.sq { width: 15px; height: 15px; margin-right: 1px; margin-top: -1px; }
.yellow { background: #fdf1bc; }
.water { background: #a5bfdd; }
.tabs { display: flex; align-items: flex-start; height: 29px; }
.tab { height: 26px; line-height: 27px; padding-left: 8px; border: 1px solid #bcb8b4; border-top: 0; border-left: 0; background: linear-gradient(#d9d7d5, #eae8e6); }
.cur.tab { width: 53px; height: 29px; border-left: 1px solid #bcb8b4; background: #f8f7f6; border-radius: 0 0 4px 4px; padding-left: 7px; line-height: 29px; }
.t2 { width: 66px; }
.t3 { width: 87px; }
.split { width: 6px; display: flex; align-items: center; }
.split .grip { margin-left: -4px; }
.map { width: 312px; height: 486px; border-top: 1px solid #bcb8b4; border-left: 1px solid #bcb8b4; overflow: hidden; }
.land path { fill: #fdf1bc; stroke: rgba(125, 125, 125, .38); stroke-width: 10; stroke-linejoin: round; }
.lake path { fill: #a5bfdd; }
.lake .river { fill: none; stroke: #a5bfdd; stroke-width: 3.5; }
.bord { fill: none; stroke: #c6bfa2; stroke-width: 11; stroke-linejoin: round; }
.lbl { font: italic 700 43.5px "Noto Sans"; fill: #000; stroke: rgba(255, 255, 255, .5); stroke-width: 16; stroke-linejoin: round; paint-order: stroke; }

.status { display: flex; align-items: center; height: 31px; border-top: 1px solid #c9c6c3; padding: 0 0 2px 19px; flex: none; }
.mouse { width: 18px; height: 18px; margin-right: 10px; }
.coord { width: 88px; }
.edit { border: 1px solid #a09c98; border-radius: 4px; background: #fff; color: #3c3c3c; }
.status .edit { width: 298px; height: 18px; line-height: 18px; text-align: center; margin: 1px 10px 0 1px; }
.scale { width: 48px; }
.combo2 { display: flex; width: 98px; height: 18px; line-height: 18px; border: 1px solid #a09c98; border-radius: 4px; background: #fff; color: #3c3c3c; margin-top: 1px; }
.combo2 span { width: 72px; padding-left: 4px; border-right: 1px solid #bbb; }
.combo2 i { width: 0; height: 0; border: 4px solid transparent; border-top: 5px solid #777; border-bottom: 0; margin: 6px 0 0 8px; }
.stop { width: 18px; height: 18px; margin: 0 10px 0 8px; }
.rend { width: 64px; letter-spacing: .1px; }
.epsg { color: #a3a09d; width: 83px; letter-spacing: .1px; }
.crs { width: 18px; height: 18px; }
.sizer { width: 12px; height: 12px; margin: 12px 0 0 12px; background: radial-gradient(circle, #c5c2be 1px, transparent 1.2px) 0 0 / 3px 3px; clip-path: polygon(100% 0, 100% 100%, 0 100%); }

.dialog { left: 517px; top: 10px; width: 524px; height: 653px; border: 1px solid #aaa7a3; border-top: 0; border-radius: 7px 7px 0 0; box-shadow: 0 0 9px 1px rgba(0, 0, 0, .55); clip-path: polygon(-12px -12px, 323px -12px, 323px 0, 524px 0, 524px 653px, 323px 653px, 323px 665px, -12px 665px); }
.dialog .titlebar { border-radius: 7px 7px 0 0; margin: 0 -1px; background: linear-gradient(#34332f, #504f48 2px, #3e3d39); padding-left: 12px; }
.dialog .title { color: #dfdbd2; margin-left: 10px; }
.top { display: flex; align-items: center; height: 48px; padding-left: 14px; flex: none; }
.top .cb { margin-right: 3px; }
.hl { width: 138px; height: 19px; line-height: 18px; padding-left: 2px; background: #f1d9cf; color: #6b4d42; margin-right: 10px; letter-spacing: .1px; }
.btn, .combo { border: 1px solid #a39f9b; border-bottom-color: #8a8784; border-radius: 4px; height: 25px; line-height: 24px; background: linear-gradient(#f7f7f6, #e6e5e4 50%, #d6d5d4); }
.btn { text-align: center; }
.combo { position: relative; padding-left: 4px; background: linear-gradient(#efefee, #dcdbda 45%, #cdcccb 65%, #dcdbda); }
.combo::before, .combo::after { content: ""; position: absolute; right: 5px; border: 3px solid transparent; }
.combo::before { top: 8px; border-top: 0; border-bottom: 3px solid #666; }
.combo::after { bottom: 3px; border-bottom: 0; border-top: 3px solid #666; }
.name { width: 81px; margin-right: 8px; background: linear-gradient(#f5f5f4, #e2e1e0 50%, #d4d3d2 70%, #e0dfde); }
.eps { width: 44px; margin-right: 151px; color: #444; }
.eps em { font: 26px/14px "Liberation Serif"; color: #5a2d64; }
.auto { width: 44px; display: flex; justify-content: center; align-items: center; }
.auto svg { width: 24px; height: 18px; }
.collapse { display: flex; align-items: center; height: 18px; padding-left: 13px; margin-top: -3px; flex: none; letter-spacing: .15px; }
.collapse i { border: 6px solid transparent; border-top: 7px solid #333; border-bottom: 0; margin-right: 7px; margin-top: 3px; }
.sample { display: flex; padding: 3px 0 0 19px; gap: 3px; flex: none; }
.preview { width: 476px; height: 78px; border: 1px solid #bcb8b4; background: #fff; padding: 9px 8px; color: #000; font: italic 700 14.1px/20px "Noto Sans"; }
.scroll { width: 13px; height: 78px; }
.samplectl { display: flex; align-items: center; height: 29px; padding-left: 20px; flex: none; }
.samplectl .edit { width: 192px; height: 25px; line-height: 24px; padding-left: 3px; margin-right: 2px; }
.undo { width: 20px; height: 20px; display: flex; justify-content: center; align-items: center; margin: -2px 10px 0 0; }
.undo svg { width: 14px; height: 14px; }
.s1 { width: 196px; height: 20px; margin-right: 7px; }
.knob { fill: #f5f4f3; stroke: #a09d99; }
.color { border: 1px solid #aaa7a3; border-right-color: #888; border-bottom-color: #888; border-radius: 4px; padding: 2px; background: #f2f1f0; }
.color::before { content: ""; display: block; height: 100%; border-radius: 2px; background: #fff; }
.white { width: 64px; height: 23px; }
.black { width: 100px; height: 23px; margin-left: -1px; }
.black::before { background: #000; }
.dots { display: flex; height: 8px; gap: 2px; padding: 3px 0 0 258px; flex: none; }
.dots i { width: 1px; height: 4px; background: #c5c2be; }
.body { display: flex; gap: 6px; padding-left: 14px; height: 399px; flex: none; }
.list { width: 119px; border: 1px solid #bcb8b4; background: #fff; }
.it { display: flex; align-items: center; height: 22px; padding-left: 3px; color: #3c3c3c; }
.it svg { width: 20px; height: 20px; margin-right: 6px; }
.it span { margin-top: 2px; letter-spacing: .05px; }
.it.cur { background: linear-gradient(#eae9e7, #dbd9d7); }
.panel { width: 372px; border: 1px solid #bcb8b4; padding-left: 6px; }
.ptitle { height: 30px; line-height: 30px; }
.row { display: flex; align-items: center; height: 25px; }
.row label { width: 98px; flex: none; }
.row label.in { padding-left: 2px; }
.r39 { margin-bottom: 14px; }
.r33 { margin-bottom: 8px; }
.r32 { margin-bottom: 7px; }
.r34 { margin-bottom: 9px; }
.r30.short { height: 22px; margin-bottom: 8px; }
.r32.short { height: 23px; margin-bottom: 9px; }
.f { width: 225px; flex: none; }
.dd { width: 25px; height: 20px; margin: -1px 0 0 8px; }
.dd.far { margin-left: 134px; }
.fb { width: 22px; height: 22px; border: 1px solid #9b9894; border-radius: 4px; text-align: center; line-height: 20px; background: linear-gradient(#f4f4f3, #dcdbda); flex: none; }
.off { color: #b3b0ad; border-color: #c6c3c0; background: #e9e8e7; }
.m9 { margin-left: 9px; }
.m20 { margin-left: 20px; }
.spin { position: relative; height: 25px; line-height: 24px; padding-left: 5px; border: 1px solid #a09c98; border-radius: 4px; background: #fff; color: #3c3c3c; overflow: hidden; flex: none; }
.spin i { position: absolute; right: 0; top: 0; width: 16px; height: 23px; border-left: 1px solid #c3c0bd; background: linear-gradient(#fff, #e9e8e6); }
.spin i::before, .spin i::after { content: ""; position: absolute; left: 5px; border: 3px solid transparent; }
.spin i::before { top: 5px; border-top: 0; border-bottom-color: #777; }
.spin i::after { bottom: 4px; border-bottom: 0; border-top-color: #666; }
.spin i.lo::after { border-top-color: #c5c2be; }
.s2 { width: 148px; height: 20px; margin-right: 8px; }
.pct { width: 69px; }
.w1 { width: 46px; margin-left: -1px; }
.w2 { width: 42px; margin-left: -1px; }
.sl { width: 180px; }
.sw { width: 184px; }
.buttons { display: flex; gap: 8px; padding: 7px 0 0 245px; flex: none; }
.buttons .btn { width: 83px; }
.ok { background: linear-gradient(#f9b195, #f2916a); border-color: #a9745f; }
```
